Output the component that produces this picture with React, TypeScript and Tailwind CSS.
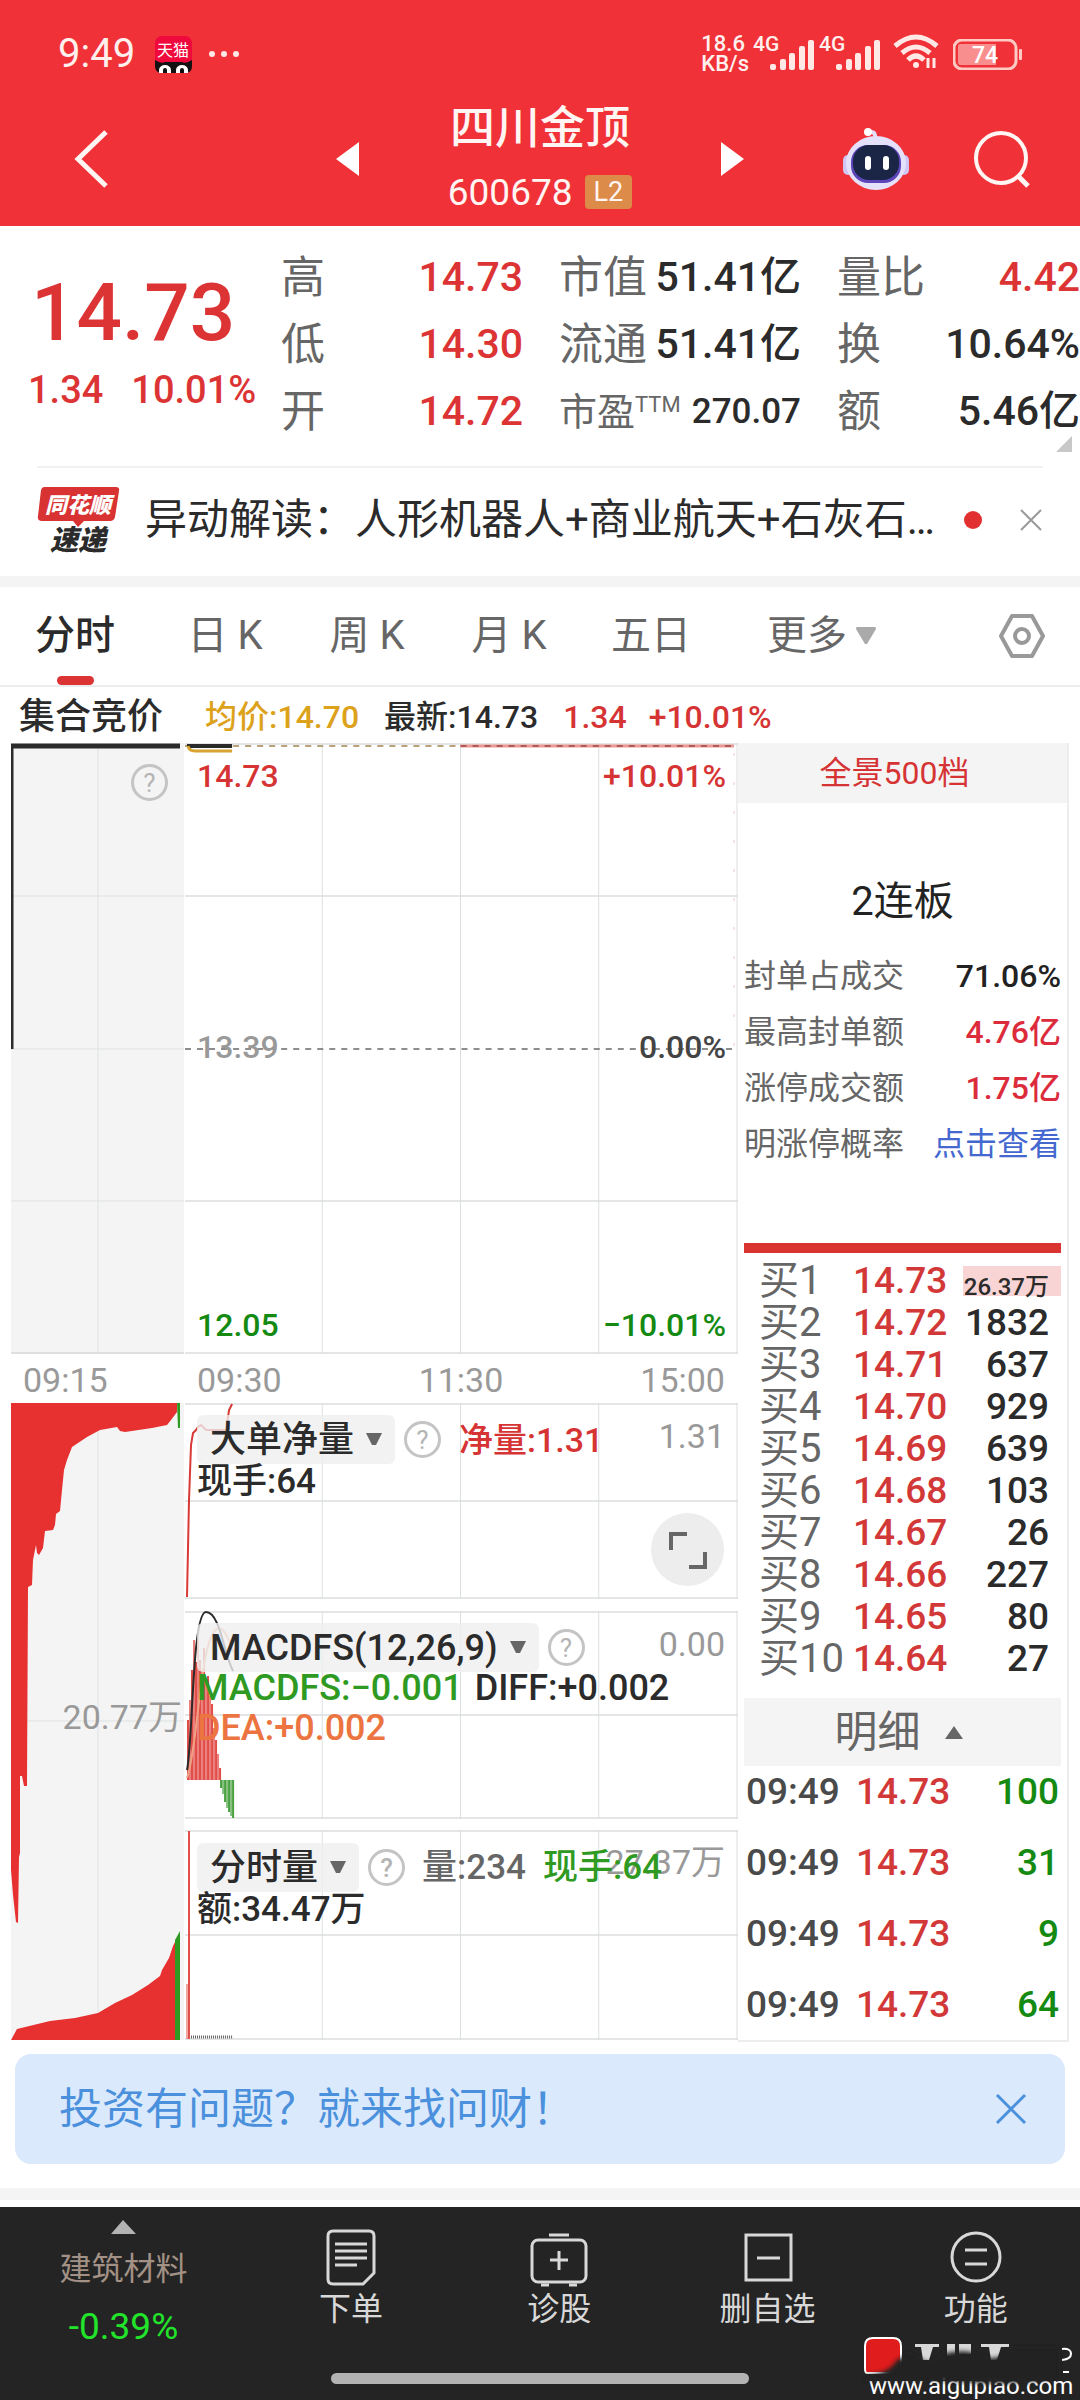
import React from 'react';

const bids = [
  ['1', '14.73', '26.37万'],
  ['2', '14.72', '1832'],
  ['3', '14.71', '637'],
  ['4', '14.70', '929'],
  ['5', '14.69', '639'],
  ['6', '14.68', '103'],
  ['7', '14.67', '26'],
  ['8', '14.66', '227'],
  ['9', '14.65', '80'],
  ['10', '14.64', '27'],
];

const trades = [
  ['09:49', '14.73', '100'],
  ['09:49', '14.73', '31'],
  ['09:49', '14.73', '9'],
  ['09:49', '14.73', '64'],
];

const limitInfo = [
  { label: '封单占成交', value: '71.06%', color: 'text-[#222]' },
  { label: '最高封单额', value: '4.76亿', color: 'text-[#dc2c3c]' },
  { label: '涨停成交额', value: '1.75亿', color: 'text-[#dc2c3c]' },
];

const tabs = ['日 K', '周 K', '月 K', '五日'];

const macdUp = [60, 80, 110, 140, 118, 142, 120, 110, 132, 98, 104, 84, 76, 52, 40, 26, 12];
const macdDown = [8, 14, 22, 28, 32, 36, 38];

const Signal = () => (
  <svg className="w-[45px] h-[30px]" viewBox="0 0 45 30" fill="#ffe9e6">
    <rect x="0" y="24" width="6" height="6" rx="2" />
    <rect x="10" y="19" width="6" height="11" rx="2" />
    <rect x="19" y="13" width="6" height="17" rx="2" />
    <rect x="29" y="6" width="6" height="24" rx="2" />
    <rect x="38" y="0" width="6" height="30" rx="2" />
  </svg>
);

const Network = () => (
  <div className="relative w-[66px] h-[40px]">
    <span className="absolute left-1 top-0 text-[21px] leading-[20px] font-medium">4G</span>
    <span className="absolute right-0 bottom-1 leading-none"><Signal /></span>
  </div>
);

const StatusBar = () => (
  <div className="h-[108px] pl-[58px] pr-[57px] flex items-center text-[#fff0ee]">
    <span className="text-[40px] leading-none">9:49</span>
    <svg className="ml-5 w-[37px] h-[37px]" viewBox="0 0 37 37">
      <rect width="37" height="37" rx="7" fill="#f0093c" />
      <path d="M0 24 Q6 28 10 26 H27 Q31 28 37 24 V30 Q37 37 30 37 H7 Q0 37 0 30Z" fill="#111" />
      <path d="M4 37 V34 a6 5 0 0 1 12 0 V37Z M21 37 V34 a6 5 0 0 1 12 0 V37Z" fill="#fff" />
      <path d="M8 37 V34 a2 2 0 0 1 4 0 V37Z M25 37 V34 a2 2 0 0 1 4 0 V37Z" fill="#111" />
      <text x="18" y="20" textAnchor="middle" fontSize="16" fill="#fff">天猫</text>
    </svg>
    <svg className="ml-4 w-8 h-2" viewBox="0 0 32 8" fill="#ffe9e6">
      <circle cx="4" cy="4" r="3" />
      <circle cx="16" cy="4" r="3" />
      <circle cx="28" cy="4" r="3" />
    </svg>
    <div className="ml-auto flex items-end">
      <div className="text-[22px] leading-[20px] font-medium">
        <div>18.6</div>
        <div>KB/s</div>
      </div>
      <Network />
      <Network />
      <svg className="ml-3 mb-1 w-[48px] h-[36px]" viewBox="0 0 48 36" fill="none" stroke="#ffe9e6" strokeWidth="5">
        <path d="M2 12 Q23 -6 44 12" />
        <path d="M9 19 Q23 7 37 19" />
        <path d="M15 26 Q23 18 31 26" />
        <circle cx="23" cy="31" r="3" fill="#ffe9e6" stroke="none" />
        <path d="M35 24 V34 M41 24 V34" strokeWidth="3" />
      </svg>
      <svg className="ml-3 mb-1 w-[70px] h-[31px]" viewBox="0 0 70 31">
        <rect x="1" y="1" width="62" height="29" rx="8" fill="none" stroke="#ffc9c4" strokeWidth="3" />
        <path d="M7 5 H43 V26 H7 Q5 26 5 23 V8 Q5 5 7 5Z" fill="#f98e8f" />
        <rect x="66" y="10" width="3" height="11" rx="1" fill="#ffc9c4" />
        <text x="32" y="24" textAnchor="middle" fontSize="23" fontWeight="500" fill="#fff">74</text>
      </svg>
    </div>
  </div>
);

const TitleBar = () => (
  <div className="h-[118px] px-[50px] pb-4 grid grid-cols-[1fr_408px_1fr] items-center text-[#fff5f3]">
    <button aria-label="返回" className="w-10 ml-[22px]">
      <svg className="w-10 h-[62px]" viewBox="0 0 40 62" fill="none" stroke="#fff5f3" strokeWidth="5">
        <path d="M34 4 L6 31 L34 58" />
      </svg>
    </button>
    <div className="h-[102px] flex items-center justify-between">
      <button aria-label="上一只"><svg className="w-[23px] h-[34px]" viewBox="0 0 23 34"><path d="M23 0 V34 L0 17Z" fill="#fff" /></svg></button>
      <div className="flex flex-col items-center">
        <h1 className="text-[45px] leading-[60px] font-medium">四川金顶</h1>
        <div className="mt-[6px] flex items-center gap-3 h-[54px]">
          <span className="text-[37px] leading-none">600678</span>
          <span className="bg-[#dc8c48] rounded-sm px-[9px] text-[27px] leading-[34px]">L2</span>
        </div>
      </div>
      <button aria-label="下一只"><svg className="w-[23px] h-[34px]" viewBox="0 0 23 34"><path d="M0 0 V34 L23 17Z" fill="#fff" /></svg></button>
    </div>
    <div className="flex items-center justify-end gap-[62px]">
      <button aria-label="智能助手">
        <svg className="w-[68px] h-[64px]" viewBox="0 0 68 64">
          <path d="M33 12 Q34 4 28 5" fill="none" stroke="#e4def8" strokeWidth="4" strokeLinecap="round" />
          <circle cx="26" cy="5" r="4" fill="#fff" />
          <rect x="1" y="28" width="10" height="20" rx="5" fill="#cfc6f2" />
          <rect x="57" y="28" width="10" height="20" rx="5" fill="#cfc6f2" />
          <ellipse cx="34" cy="36" rx="30" ry="27" fill="#e6e1fa" />
          <rect x="9" y="18" width="50" height="38" rx="17" fill="#5b45b8" />
          <rect x="11" y="18" width="46" height="35" rx="16" fill="#1b2545" />
          <rect x="23" y="29" width="6" height="14" rx="3" fill="#fff" />
          <rect x="41" y="29" width="6" height="14" rx="3" fill="#fff" />
        </svg>
      </button>
      <button aria-label="搜索">
        <svg className="w-[58px] h-[58px]" viewBox="0 0 58 58" fill="none" stroke="#fff5f3" strokeWidth="4">
          <circle cx="29" cy="28" r="25" />
          <path d="M46 46 L56 56" strokeWidth="5" />
        </svg>
      </button>
    </div>
  </div>
);

const QuoteCell = ({ label, value, red = false }: { label: React.ReactNode; value: string; red?: boolean }) => (
  <div className="h-[67px] flex items-center justify-between whitespace-nowrap">
    <dt className="text-[#666] text-[44px] leading-none">{label}</dt>
    <dd className={`text-[41px] leading-none font-medium ${red ? 'text-[#dc3434]' : 'text-[#2b2b2b]'}`}>{value}</dd>
  </div>
);

const Quote = () => (
  <section className="relative h-[240px] pt-[18px] flex">
    <div className="w-[281px] text-[#dc3434] font-medium shrink-0">
      <div className="pl-[31px] pt-[24px] text-[80px] leading-[90px]">14.73</div>
      <div className="pl-7 pt-[10px] flex gap-7 text-[38px] leading-[44px] whitespace-nowrap">
        <span>1.34</span>
        <span>10.01%</span>
      </div>
    </div>
    <dl className="flex-1 grid grid-cols-[242px_242px_1fr] gap-x-[36px]">
      <div>
        <QuoteCell label="高" value="14.73" red />
        <QuoteCell label="低" value="14.30" red />
        <QuoteCell label="开" value="14.72" red />
      </div>
      <div>
        <QuoteCell label="市值" value="51.41亿" />
        <QuoteCell label="流通" value="51.41亿" />
        <div className="h-[67px] flex items-center justify-between whitespace-nowrap">
          <dt className="flex text-[#666] text-[38px] leading-none">市盈<span className="text-[22px] leading-[24px]">TTM</span></dt>
          <dd className="text-[35px] leading-none font-medium text-[#2b2b2b]">270.07</dd>
        </div>
      </div>
      <div>
        <QuoteCell label="量比" value="4.42" red />
        <QuoteCell label="换" value="10.64%" />
        <QuoteCell label="额" value="5.46亿" />
      </div>
    </dl>
    <svg className="absolute right-2 bottom-[14px] w-4 h-4" viewBox="0 0 16 16"><path d="M16 0 V16 H0Z" fill="#c8c8c8" /></svg>
  </section>
);

const NewsLine = () => (
  <div className="mx-[37px] h-[110px] pb-1 border-t-2 border-[#f2f2f2] flex items-center">
    <svg className="w-[84px] h-[70px] shrink-0 overflow-visible" viewBox="0 0 84 70">
      <path d="M7 2 H79 Q83 2 82 6 L78 32 Q77 36 73 36 H47 L41 42 L36 36 H5 Q0 36 1 31 L4 5 Q5 2 7 2Z" fill="#d93232" />
      <text x="41" y="28" textAnchor="middle" fontSize="22" fontWeight="900" fontStyle="italic" fill="#fff">同花顺</text>
      <text x="41" y="65" textAnchor="middle" fontSize="28" fontWeight="900" fontStyle="italic" fill="#2b2b2b">速递</text>
    </svg>
    <a href="#news" className="ml-6 text-[42px] leading-[60px] text-[#2b2b2b] whitespace-nowrap">异动解读：人形机器人+商业航天+石灰石…</a>
    <span className="ml-auto w-[18px] h-[18px] rounded-full bg-[#e23030] shrink-0" />
    <button aria-label="关闭" className="ml-[37px]">
      <svg className="w-6 h-6" viewBox="0 0 24 24" stroke="#999" strokeWidth="2"><path d="M2 2 L22 22 M22 2 L2 22" /></svg>
    </button>
  </div>
);

const TabBar = () => (
  <nav className="h-[100px] pl-[35px] pr-[35px] border-b-2 border-[#ececec] flex items-stretch text-[40px] text-[#666]">
    <button className="relative w-[80px] text-[#2b2b2b] font-medium">
      分时
      <span className="absolute left-[22px] bottom-0 w-[37px] h-[9px] rounded-full bg-[#dc3434]" />
    </button>
    <div className="ml-[70px] flex gap-[62px]">
      {tabs.map((t) => (
        <button key={t} className="w-[80px] whitespace-nowrap text-center">{t}</button>
      ))}
    </div>
    <button className="ml-[76px] flex items-center gap-[9px]">
      更多
      <svg className="w-5 h-[18px]" viewBox="0 0 20 18"><path d="M1 0 H19 Q20 0 20 2 L11 17 H9 L0 2Q0 0 1 0Z" fill="#aaa" /></svg>
    </button>
    <button aria-label="设置" className="ml-auto">
      <svg className="w-[46px] h-[44px]" viewBox="0 0 46 44" fill="none" stroke="#999" strokeWidth="4" strokeLinejoin="round">
        <path d="M13 2 H33 L44 22 L33 42 H13 L2 22Z" />
        <circle cx="23" cy="22" r="7" />
      </svg>
    </button>
  </nav>
);

const Help = () => (
  <button aria-label="说明" className="w-[37px] h-[37px] rounded-full border-[3px] border-[#c4c4c4] text-[#b4b4b4] text-[26px] leading-none flex items-center justify-center shrink-0">?</button>
);

const Chip = ({ text }: { text: string }) => (
  <button className="h-[49px] px-[13px] rounded-md bg-[#efefef]/80 flex items-center gap-[12px] text-[36px] leading-none font-medium text-[#2b2b2b] whitespace-nowrap">
    {text}
    <svg className="w-4 h-[13px]" viewBox="0 0 16 13"><path d="M0 0 H16 L10 12 H6Z" fill="#666" /></svg>
  </button>
);

const Grid = ({ h, mid }: { h: number; mid: number[] }) => (
  <g stroke="#e3e5e6" strokeWidth="2">
    <path d={`M0 1 H552 M0 ${h - 1} H552`} />
    {mid.map((y) => <path key={y} d={`M0 ${y} H552`} />)}
    {[137, 275, 413, 551].map((x) => <path key={x} d={`M${x} 0 V${h}`} strokeWidth="1" stroke="#dcdfe0" />)}
  </g>
);

const AuctionColumn = () => (
  <div className="w-[173px] shrink-0">
    <div className="relative h-[611px] bg-[#f4f4f4] text-right">
      <svg className="absolute inset-0 w-full h-full" viewBox="0 0 173 611" preserveAspectRatio="none" fill="none">
        <path d="M87 0 V611 M0 153 H173 M0 306 H173 M0 458 H173" stroke="#dfe1e2" />
        <path d="M0 610 H173" stroke="#e0e0e0" strokeWidth="2" />
        <path d="M0 306 V3 H169" stroke="#2b2b2b" strokeWidth="5" />
      </svg>
      <div className="relative flex justify-end pt-[21px] pr-4"><Help /></div>
    </div>
    <div className="h-[49px] pl-[12px] text-[34px] leading-[52px] text-[#999]">09:15</div>
    <div className="relative h-[637px] bg-[#f4f4f4]">
      <svg className="absolute inset-0 w-full h-full" viewBox="11 1403 173 637" preserveAspectRatio="none">
        <path d="M98 1403 V2040 M11 1721 H184" stroke="#dfe1e2" />
        <path d="M11 1403 H177 V1412 L171 1420 L167 1425 L152 1428 L125 1432 L120 1431 L117 1427 L100 1430 L87 1437 L72 1447 L67 1460 L64 1470 L62 1490 L60 1511 L56 1514 L55 1525 L53 1530 L45 1531 L43 1548 L39 1555 L37 1553 L36 1545 L33 1560 L32 1585 L28 1587 L27 1786 L24 1786 L22 1776 L20 1776 L20 1853 L19 1857 L18 1923 L16 1922 L13 1895 L11 1870Z" fill="#e73030" />
        <path d="M177 1403 H180 V1428 H178Z" fill="#2f9a22" />
        <path d="M11 2040 L17 2029 L50 2021 L75 2018 L98 2013 L115 2003 L132 1995 L148 1985 L160 1976 L162 1970 L169 1958 L173 1946 L176 1940 V2040Z" fill="#e73030" />
        <path d="M175 2040 V1940 L180 1931 V2040Z" fill="#2f9a22" />
      </svg>
      <span className="absolute right-[2px] top-[292px] text-[34px] leading-[44px] text-[#999]">20.77万</span>
    </div>
  </div>
);

const PriceChart = () => (
  <div className="relative h-[611px] text-[32px] leading-[36px] font-medium">
    <svg className="absolute inset-0 w-full h-full" viewBox="0 0 552 611" preserveAspectRatio="none" fill="none">
      <Grid h={611} mid={[153, 458]} />
      <path d="M0 3 H552" stroke="#b9a27a" strokeWidth="2" strokeDasharray="6 6" />
      <path d="M275 3 H548" stroke="#eb9a94" strokeWidth="3" />
      <path d="M275 3 H548" stroke="#b25a55" strokeWidth="2" strokeDasharray="6 6" />
      <path d="M2 3 H47" stroke="#2b2b2b" strokeWidth="4" />
      <path d="M3 3 Q4 8 10 8 H47" stroke="#d9a431" strokeWidth="3" />
      <path d="M0 306 H552" stroke="#8d8d8d" strokeWidth="2" strokeDasharray="6 6" />
      <path d="M548 10 V306" stroke="#efc9c6" strokeWidth="1" strokeDasharray="3 26" />
    </svg>
    <div className="relative h-full flex flex-col justify-between px-[12px] pt-[15px] pb-[11px]">
      <div className="flex justify-between text-[#d63434]"><span>14.73</span><span>+10.01%</span></div>
      <div className="flex justify-between pb-2"><span className="text-[#999]">13.39</span><span className="text-[#444]">0.00%</span></div>
      <div className="flex justify-between text-[#158a12]"><span>12.05</span><span>−10.01%</span></div>
    </div>
  </div>
);

const IndicatorPanels = () => (
  <>
    <div className="relative h-[196px]">
      <svg className="absolute inset-0 w-full h-full" viewBox="185 1403 552 196" preserveAspectRatio="none" fill="none">
        <g transform="translate(185 1403)"><Grid h={196} mid={[98]} /></g>
        <path d="M187 1597 L189 1500 L191 1445 L193 1433 L196 1430 L198 1427 L201 1425 L206 1430 L226 1430 L229 1410 L232 1404" stroke="#d83a36" strokeWidth="2" />
      </svg>
      <div className="relative pl-[12px] pt-[12px]">
        <div className="flex items-center">
          <Chip text="大单净量" />
          <span className="ml-[9px]"><Help /></span>
          <span className="ml-[18px] text-[34px] leading-none font-medium text-[#d63434]">净量:1.31</span>
          <span className="ml-auto mr-[13px] pb-2 text-[34px] leading-none text-[#999]">1.31</span>
        </div>
        <div className="text-[35px] leading-[36px] font-medium text-[#2b2b2b]">现手:64</div>
      </div>
      <button aria-label="全屏" className="absolute right-[14px] bottom-[13px] w-[73px] h-[73px] rounded-full bg-[#ededed] flex items-center justify-center">
        <svg className="w-[40px] h-[40px]" viewBox="0 0 40 40" fill="none" stroke="#666" strokeWidth="4">
          <path d="M3 20 V4 H19 M37 22 V37 H21" />
        </svg>
      </button>
    </div>
    <div className="relative mt-[12px] h-[208px]">
      <svg className="absolute inset-0 w-full h-full" viewBox="185 1611 552 208" preserveAspectRatio="none" fill="none">
        <g transform="translate(185 1611)"><Grid h={208} mid={[104]} /></g>
        {macdUp.map((v, i) => <path key={i} d={`M${188 + i * 2} 1780 V${1780 - v}`} stroke="#de3a34" strokeWidth="2" strokeOpacity={i % 2 ? 0.65 : 0.9} />)}
        {macdDown.map((v, i) => <path key={i} d={`M${221 + i * 2} 1780 V${1780 + v}`} stroke="#35962a" strokeWidth="2" strokeOpacity={i % 2 ? 0.6 : 0.9} />)}
        <path d="M187 1778 C194 1760 198 1700 204 1665 S220 1610 233 1652" stroke="#f0a184" strokeWidth="2" />
        <path d="M187 1770 C193 1740 192 1612 206 1612 S224 1655 233 1671" stroke="#2b2b2b" strokeWidth="2" />
      </svg>
      <div className="relative pl-[12px] pt-[12px]">
        <div className="flex items-center">
          <Chip text="MACDFS(12,26,9)" />
          <span className="ml-[9px]"><Help /></span>
          <span className="ml-auto mr-[13px] pb-2 text-[34px] leading-none text-[#999]">0.00</span>
        </div>
        <div className="-mt-1 text-[36px] leading-[40px] font-medium whitespace-nowrap">
          <div className="flex gap-3"><span className="text-[#2f9a22]">MACDFS:−0.001</span><span className="text-[#2b2b2b]">DIFF:+0.002</span></div>
          <div className="text-[#ec7440]">DEA:+0.002</div>
        </div>
      </div>
    </div>
    <div className="relative mt-[11px] h-[210px]">
      <svg className="absolute inset-0 w-full h-full" viewBox="185 1830 552 210" preserveAspectRatio="none" fill="none">
        <g transform="translate(185 1830)"><Grid h={210} mid={[105]} /></g>
        <path d="M189 1831 V2039" stroke="#e2504b" strokeWidth="2" />
        <path d="M187 1984 V2039" stroke="#e2504b" strokeWidth="1" />
        <path d="M191 2037 H233" stroke="#666" strokeWidth="3" strokeDasharray="1 1" />
      </svg>
      <span className="absolute right-[13px] top-[10px] text-[34px] leading-[44px] text-[#999]">27.37万</span>
      <div className="relative pl-[12px] pt-[13px] font-medium text-[35px]">
        <div className="flex items-center leading-none">
          <Chip text="分时量" />
          <span className="ml-[9px]"><Help /></span>
          <span className="ml-[17px] text-[#666]">量:234</span>
          <span className="ml-[17px] text-[#2f9a22]">现手:64</span>
        </div>
        <div className="leading-[36px] text-[#2b2b2b]">额:34.47万</div>
      </div>
    </div>
  </>
);

const OrderBook = () => (
  <aside className="w-[331px] shrink-0 border-r-2 border-b-2 border-[#ededed]">
    <button className="w-full h-[60px] bg-[#f4f4f4] pr-4 text-[32px] text-[#d63434]">全景500档</button>
    <div className="px-[6px]">
      <div className="mt-[69px] text-center text-[40px] leading-[60px] text-[#222]">2连板</div>
      <dl className="mt-[16px]">
        {limitInfo.map((r) => (
          <div key={r.label} className="h-[56px] flex items-center justify-between leading-none">
            <dt className="text-[32px] text-[#666]">{r.label}</dt>
            <dd className={`text-[32px] font-medium ${r.color}`}>{r.value}</dd>
          </div>
        ))}
        <div className="h-[56px] flex items-center justify-between leading-none">
          <dt className="text-[32px] text-[#666]">明涨停概率</dt>
          <dd className="text-[32px]"><a href="#rate" className="text-[#4468cf]">点击查看</a></dd>
        </div>
      </dl>
      <div className="mt-[71px] h-[10px] bg-[#d93430]" />
      <table className="mt-[7px] w-full text-[37px] leading-[42px] font-medium">
        <tbody>
          {bids.map(([n, price, vol], i) => (
            <tr key={n} className="h-[42px]">
              <th scope="row" className="p-0 pl-[15px] text-left font-normal text-[40px] text-[#666] whitespace-nowrap w-[109px]">买{n}</th>
              <td className="p-0 text-[#d23838]">{price}</td>
              <td className="p-0 text-right text-[#2b2b2b]">
                {i === 0 ? (
                  <div className="ml-auto w-[98px] h-[30px] pr-[12px] bg-[#f9d4d4] flex justify-end text-[24px] leading-[42px] whitespace-nowrap">{vol}</div>
                ) : (
                  <span className="pr-[12px]">{vol}</span>
                )}
              </td>
            </tr>
          ))}
        </tbody>
      </table>
      <button className="mt-[18px] w-full h-[68px] bg-[#f4f4f4] pr-2 flex items-center justify-center gap-6 text-[43px] leading-none text-[#666]">
        明细
        <svg className="w-[18px] h-[13px]" viewBox="0 0 18 13"><path d="M9 0 L18 13 H0Z" fill="#666" /></svg>
      </button>
      <table className="w-full -mt-[10px] text-[37px] leading-none font-medium">
        <tbody>
          {trades.map(([time, price, vol], i) => (
            <tr key={i} className="h-[71px]">
              <td className="p-0 pl-[2px] text-[#4a4a4a] w-[112px]">{time}</td>
              <td className="p-0 text-[#d23838]">{price}</td>
              <td className="p-0 pr-[2px] text-right text-[#158a12]">{vol}</td>
            </tr>
          ))}
        </tbody>
      </table>
    </div>
  </aside>
);

const ChartArea = () => (
  <section className="pl-[11px] pr-[11px]">
    <div className="h-[56px] pl-[8px] flex items-center text-[32px] leading-none font-medium whitespace-nowrap pt-1">
      <span className="text-[36px] text-[#2b2b2b]">集合竞价</span>
      <span className="ml-[42px] text-[#dda21c]">均价:14.70</span>
      <span className="ml-[25px] text-[#2b2b2b]">最新:14.73</span>
      <span className="ml-[25px] text-[#d63434]">1.34</span>
      <span className="ml-[22px] text-[#d63434]">+10.01%</span>
    </div>
    <div className="flex items-start">
      <AuctionColumn />
      <div className="flex-1 min-w-0 ml-[1px]">
        <PriceChart />
        <div className="h-[49px] pl-[12px] pr-[13px] flex justify-between text-[34px] leading-[52px] text-[#999]">
          <span>09:30</span><span>11:30</span><span>15:00</span>
        </div>
        <IndicatorPanels />
      </div>
      <OrderBook />
    </div>
  </section>
);

const NavItem = ({ label, children }: { label: string; children: React.ReactNode }) => (
  <button className="flex-1 pt-[20px] flex flex-col items-center text-[32px] leading-[42px] text-[#d8d8d8]">
    <svg className="w-[60px] h-[60px]" viewBox="0 0 60 60" fill="none" stroke="#d8d8d8" strokeWidth="3">{children}</svg>
    <span className="mt-[1px]">{label}</span>
  </button>
);

const BottomNav = () => (
  <footer className="relative h-[193px] bg-[#242424] flex items-start">
    <button className="w-[247px] pt-[13px] flex flex-col items-center">
      <svg className="w-[25px] h-[14px]" viewBox="0 0 25 14"><path d="M12 0 L25 14 H0Z" fill="#b3b3b3" /></svg>
      <span className="mt-[12px] text-[32px] leading-[46px] text-[#a29184]">建筑材料</span>
      <span className="mt-[12px] text-[37px] leading-[46px] text-[#22e42a]">-0.39%</span>
    </button>
    <NavItem label="下单">
      <path d="M12 4 H48 Q53 4 53 9 V46 L42 57 H12 Q7 57 7 52 V9 Q7 4 12 4Z" />
      <path d="M14 17 H46 M14 24 H46 M14 31 H46 M14 38 H36" />
    </NavItem>
    <NavItem label="诊股">
      <rect x="3" y="13" width="54" height="42" rx="6" />
      <path d="M20 8 H40 M30 24 V43 M21 33 H39 M12 58 H20 M40 58 H48" />
    </NavItem>
    <NavItem label="删自选">
      <rect x="8" y="8" width="45" height="45" />
      <path d="M19 31 H42" />
    </NavItem>
    <NavItem label="功能">
      <circle cx="30" cy="30" r="24" />
      <path d="M19 23 H41 M19 37 H41" />
    </NavItem>
    <span className="absolute left-1/2 -translate-x-1/2 bottom-[16px] w-[418px] h-[11px] rounded-full bg-[#b3b3b3]" />
    <div className="absolute right-[5px] bottom-0 w-[212px] h-[64px] overflow-hidden">
      <span className="absolute left-[6px] bottom-[1px] text-[24px] leading-[26px] text-white">www.aigupiao.com</span>
      <svg className="absolute inset-0 w-full h-full" viewBox="0 0 212 64">
        <defs>
          <filter id="smear"><feGaussianBlur stdDeviation="2" /></filter>
        </defs>
        <path d="M10 2 H30 Q38 2 38 10 V37 H4 Q2 37 2 32 V10 Q2 2 10 2Z" fill="#e01c1c" stroke="#fff" strokeWidth="2" />
        <g fill="#d8d8d8">
          <path d="M52 8 H76 V11 H70 L66 24 H60 L58 11 H52Z M84 8 H92 V20 H84Z M96 8 H108 V18 H96Z M118 8 H146 V11 H138 L134 24 H128 L126 11 H118Z" />
        </g>
        <path d="M199 13 Q208 12 208 18 Q208 23 199 24 M200 36 H206" stroke="#fff" strokeWidth="2" fill="none" />
        <path d="M0 40 Q26 38 34 24 L46 18 L60 24 Q70 30 80 18 Q94 14 108 16 Q124 26 138 20 L150 12 H196 V42 Q150 50 100 46 T0 44Z" fill="#242424" filter="url(#smear)" />
      </svg>
    </div>
  </footer>
);

const App: React.FC = () => (
  <div className="w-full bg-white font-['Roboto','Noto_Sans_CJK_SC',sans-serif] overflow-hidden">
    <header className="bg-[#f03138]">
      <StatusBar />
      <TitleBar />
    </header>
    <Quote />
    <NewsLine />
    <div className="h-[11px] bg-[#f4f4f4]" />
    <TabBar />
    <ChartArea />
    <div className="mt-[12px] mx-[15px] h-[110px] pl-[44px] pr-[38px] rounded-2xl bg-[#dae9fb] flex items-center justify-between text-[#4a90dc]">
      <a href="#ask" className="text-[43px] leading-none">投资有问题？就来找问财！</a>
      <button aria-label="关闭提示">
        <svg className="w-8 h-8" viewBox="0 0 32 32" stroke="#4a90dc" strokeWidth="3"><path d="M2 2 L30 30 M30 2 L2 30" /></svg>
      </button>
    </div>
    <div className="mt-[24px] mb-[7px] h-[12px] bg-[#f4f4f4]" />
    <BottomNav />
  </div>
);

export default App;
